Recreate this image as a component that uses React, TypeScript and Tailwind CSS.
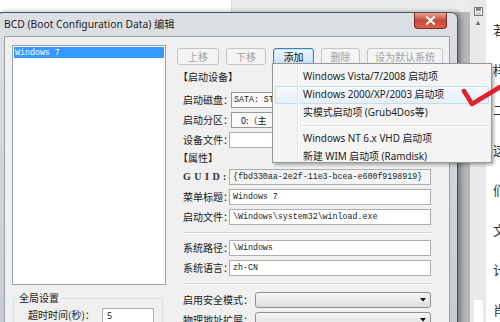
import React from "react";

const CJK = "font-['Noto_Sans_CJK_SC',sans-serif]";
const MONO = "font-['Liberation_Mono',monospace]";

function Field({ label, lw, children }: { label: string; lw: string; children: React.ReactNode }) {
  return (
    <div className="flex items-center h-[16px] pl-[6px] w-[254px]">
      <span className={`${lw} shrink-0 ${CJK} text-[10px] leading-none text-[#1b1b1b] whitespace-nowrap`}>{label}</span>
      {children}
    </div>
  );
}

function TextBox({ text, gray }: { text?: string; gray?: boolean }) {
  return (
    <div
      className={`flex-1 h-full border border-[#abadb3] ${gray ? "bg-[#f4f4f4]" : "bg-white"} flex items-center pl-[3px] ${MONO} text-[8.3px] text-[#222] overflow-hidden whitespace-nowrap`}
    >
      {text}
    </div>
  );
}

function Arrow() {
  return (
    <svg width="6" height="4" viewBox="0 0 6 4">
      <path d="M0 0 L6 0 L3 3.5 Z" fill="#111" />
    </svg>
  );
}

function Combo() {
  return (
    <div className="flex-1 h-full rounded-[3px] border border-[#8e8f8f] bg-gradient-to-b from-[#f7f7f7] to-[#dddddd] flex items-center justify-end pr-[4px]">
      <Arrow />
    </div>
  );
}

function Sep() {
  return (
    <div className="ml-[6px] w-[248px] flex flex-col">
      <div className="h-[1px] bg-[#d3d3d3]" />
      <div className="h-[1px] bg-white" />
    </div>
  );
}

function Btn({ label, w, active }: { label: string; w: string; active?: boolean }) {
  return active ? (
    <div
      className={`${w} h-[17px] rounded-[3px] border border-[#3c7fb1] bg-gradient-to-b from-[#f0f8fd] to-[#c6e4f6] shadow-[inset_0_0_0_1px_#bfe3f8] flex items-center justify-center ${CJK} text-[10px] leading-none text-[#111]`}
    >
      {label}
    </div>
  ) : (
    <div
      className={`${w} h-[17px] rounded-[3px] border border-[#c2c5c8] bg-[#f4f4f4] flex items-center justify-center ${CJK} text-[10px] leading-none text-[#a3a3a3]`}
    >
      {label}
    </div>
  );
}

function MenuItem({ text, hot }: { text: string; hot?: boolean }) {
  return (
    <div className="h-[18px] px-[2px] flex shrink-0">
      <div
        className={`flex-1 flex items-center pl-[27px] rounded-[2px] border ${
          hot ? "border-[#c5dcf0] bg-gradient-to-b from-[#f4f9fd] to-[#e4eff9]" : "border-transparent"
        } font-['Noto_Sans','Noto_Sans_CJK_SC',sans-serif] text-[9.9px] leading-none text-[#222] whitespace-nowrap`}
      >
        {text}
      </div>
    </div>
  );
}

export default function App() {
  return (
    <div className="w-[500px] h-[322px] relative overflow-hidden bg-white flex">
      {/* desktop background */}
      <div className="w-[470px] flex flex-col">
        <div className="h-[12px] shrink-0 flex">
          <div className="w-[232px] bg-white border-r border-[#dcdcdc]" />
          <div className="flex-1 bg-[#ececec]" />
        </div>
        <div className="flex-1 bg-gradient-to-r from-[#8d8d8d] to-[#b9b9b9]" />
      </div>
      <div className="w-[16px] bg-[#e9e9e9] flex flex-col items-center pt-[7px]">
        <svg width="9" height="9" viewBox="0 0 9 9">
          <rect x="0.5" y="0.5" width="8" height="8" fill="#fff" stroke="#777" />
          <rect x="2" y="1" width="5" height="3" fill="#888" />
          <rect x="2" y="5" width="5" height="3" fill="#cfcfcf" />
        </svg>
        <span className="mt-[3px] text-[7px] leading-none text-[#666]">▲</span>
        <div className="flex-1" />
        <div className="w-[9px] h-[22px] bg-white" />
      </div>
      <div className="w-[14px] bg-white overflow-hidden flex flex-col pt-[23px] pl-[7px] gap-[26px]">
        {["若", "样", "二", "这", "们", "文", "计", "肖"].map((c) => (
          <span key={c} className={`${CJK} text-[13px] leading-[14px] text-[#333] whitespace-nowrap`}>
            {c}
          </span>
        ))}
      </div>

      {/* window */}
      <div className="absolute left-[-4px] top-[12px] w-[462px] h-[320px] rounded-t-[7px] border border-[#48535e] bg-gradient-to-b from-[#dce0e4] to-[#c6cbd0] flex flex-col shadow-[3px_0_5px_rgba(0,0,0,0.35)]">
        <div className="h-[23px] shrink-0 flex items-start justify-between pl-[7px] pr-[10px]">
          <span className="mt-[6px] font-['Noto_Sans','Noto_Sans_CJK_SC',sans-serif] text-[10.3px] leading-none text-[#1e1e1e] whitespace-nowrap">
            BCD (Boot Configuration Data) 编辑
          </span>
          <div className="w-[33px] h-[16px] rounded-b-[4px] border border-t-0 border-[#7a2c22] bg-gradient-to-b from-[#e8a394] via-[#c8483a] to-[#d8634c] flex items-center justify-center">
            <svg width="11" height="9" viewBox="0 0 11 9">
              <path d="M2 1.2 L9 7.8 M9 1.2 L2 7.8" stroke="#fff" strokeWidth="2.2" strokeLinecap="round" />
            </svg>
          </div>
        </div>
        <div className="mx-[7px] flex-1 min-h-0 overflow-hidden border border-[#9aa1a8] bg-[#f0f0f0] flex pl-[7px] pt-[8px] gap-[11px]">
          {/* left column */}
          <div className="w-[154px] flex flex-col shrink-0">
            <div className="h-[240px] shrink-0 border border-[#9a9fa6] bg-white p-[1px]">
              <div className={`h-[11px] bg-[#3399ff] text-white ${MONO} text-[8.3px] leading-[11px] pl-[1px]`}>Windows 7</div>
            </div>
            <fieldset className="mt-[6px] ml-[1px] w-[150px] h-[60px] shrink-0 border border-[#d5dfe5] rounded-[3px]">
              <legend className={`ml-[3px] px-[2px] ${CJK} text-[10px] leading-[14px] text-[#1b1b1b]`}>全局设置</legend>
              <div className="mt-[3px] pl-[14px] flex items-start">
                <span className={`w-[74px] mt-[2px] ${CJK} text-[10px] leading-none text-[#1b1b1b] whitespace-nowrap`}>超时时间(秒)：</span>
                <div className="w-[52px] h-[16px] border border-[#abadb3] bg-white pl-[4px] font-['Noto_Sans',sans-serif] text-[9px] leading-[14px] text-[#222]">5</div>
              </div>
            </fieldset>
          </div>

          {/* right column */}
          <div className="flex flex-col">
            <div className="mt-[3px] flex gap-[7px] shrink-0">
              <Btn label="上移" w="w-[42px]" />
              <Btn label="下移" w="w-[40px]" />
              <Btn label="添加" w="w-[41px]" active />
              <Btn label="删除" w="w-[39px]" />
              <Btn label="设为默认系统" w="w-[76px]" />
            </div>
            <div className={`mt-[5px] h-[14px] shrink-0 flex items-center pl-[1px] ${CJK} text-[10px] leading-none text-[#1b1b1b]`}>【启动设备】</div>
            <div className="mt-[8px] flex flex-col gap-[4px] shrink-0">
              <Field label="启动磁盘：" lw="w-[48px]">
                <div className="flex-1 h-full border border-[#9a9a9a] bg-[#fafafa] flex items-center pl-[2px]">
                  <span className={`w-[38px] overflow-hidden ${MONO} text-[8.3px] leading-none text-[#222] whitespace-nowrap`}>SATA: ST</span>
                </div>
              </Field>
              <Field label="启动分区：" lw="w-[48px]">
                <div className="flex-1 h-full border border-[#9a9a9a] bg-[#fafafa] flex items-center pl-[9px]">
                  <span className={`w-[31px] overflow-hidden ${CJK} text-[9px] leading-none text-[#222] whitespace-nowrap`}>0:（主</span>
                </div>
              </Field>
              <Field label="设备文件：" lw="w-[46px]">
                <TextBox />
              </Field>
            </div>
            <div className={`mt-[3px] h-[14px] shrink-0 flex items-center pl-[1px] ${CJK} text-[10px] leading-none text-[#1b1b1b]`}>【属性】</div>
            <div className="mt-[4px] flex flex-col gap-[4px] shrink-0">
              <div className="flex items-center h-[16px] pl-[6px] w-[254px]">
                <span className="w-[46px] shrink-0 font-['Liberation_Serif',serif] font-bold text-[10px] tracking-[3.5px] leading-none text-[#333]">GUID:</span>
                <TextBox text="{fbd330aa-2e2f-11e3-bcea-e600f9198919}" gray />
              </div>
              <Field label="菜单标题：" lw="w-[46px]">
                <TextBox text="Windows 7" />
              </Field>
              <Field label="启动文件：" lw="w-[46px]">
                <TextBox text="\Windows\system32\winload.exe" />
              </Field>
            </div>
            <div className="mt-[7px] shrink-0">
              <Sep />
            </div>
            <div className="mt-[6px] flex flex-col gap-[4px] shrink-0">
              <Field label="系统路径：" lw="w-[46px]">
                <TextBox text="\Windows" />
              </Field>
              <Field label="系统语言：" lw="w-[46px]">
                <TextBox text="zh-CN" />
              </Field>
            </div>
            <div className="mt-[7px] shrink-0">
              <Sep />
            </div>
            <div className="mt-[7px] flex flex-col gap-[4px] shrink-0">
              <Field label="启用安全模式：" lw="w-[72px]">
                <Combo />
              </Field>
              <Field label="物理地址扩展：" lw="w-[72px]">
                <Combo />
              </Field>
            </div>
          </div>
        </div>
      </div>

      {/* dropdown menu */}
      <div className="absolute left-[272px] top-[63px] w-[220px] h-[100px] overflow-hidden border border-[#979797] bg-[#f5f5f5] shadow-[2px_2px_3px_rgba(0,0,0,0.3)] flex flex-col pt-[4px]">
        <div className="absolute left-[24px] top-0 bottom-0 w-[1px] bg-[#e2e3e3]" />
        <div className="absolute left-[25px] top-0 bottom-0 w-[1px] bg-white" />
        <MenuItem text="Windows Vista/7/2008 启动项" />
        <MenuItem text="Windows 2000/XP/2003 启动项" hot />
        <MenuItem text="实模式启动项 (Grub4Dos等)" />
        <div className="h-[8px] shrink-0 flex flex-col justify-center pl-[28px] pr-[2px]">
          <div className="h-[1px] bg-[#e0e0e0]" />
          <div className="h-[1px] bg-white" />
        </div>
        <MenuItem text="Windows NT 6.x VHD 启动项" />
        <MenuItem text="新建 WIM 启动项 (Ramdisk)" />
      </div>

      {/* red check mark */}
      <svg className="absolute left-[458px] top-[82px]" width="42" height="30" viewBox="0 0 42 30">
        <polyline points="6,9 14,22 42,5" fill="none" stroke="#e1212b" strokeWidth="4.5" strokeLinecap="round" strokeLinejoin="round" />
      </svg>
    </div>
  );
}
